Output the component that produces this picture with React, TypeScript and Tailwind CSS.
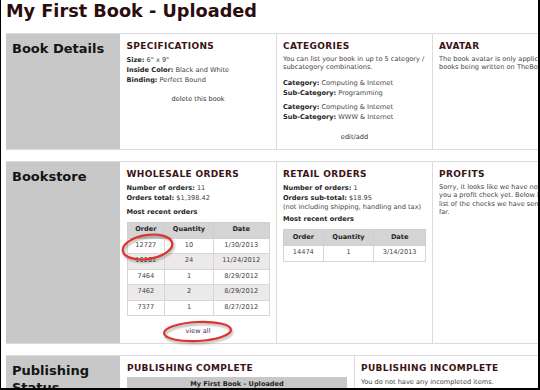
import React from "react";

type Kids = { children?: React.ReactNode };

const Heading = ({ children }: Kids) => (
  <div className="mb-[3.5px] whitespace-nowrap text-[9px] font-bold leading-[10px] tracking-[0.35px] text-[#3b1414]">
    {children}
  </div>
);

const Line = ({ label, value }: { label: string; value?: string }) => (
  <div className="whitespace-nowrap leading-[10px]">
    <span className="font-bold text-[#262626]">{label}</span>
    {value ? " " + value : ""}
  </div>
);

const SideTitle = ({ children }: Kids) => (
  <div className="w-[114px] shrink-0 bg-[#c8c8c8] pl-[6px] pt-[6px] text-[13px] font-bold leading-[17px] text-[#141414]">
    {children}
  </div>
);

function OrdersTable({
  rows,
  widths,
}: {
  rows: string[][];
  widths: string[];
}) {
  return (
    <table className="border-collapse text-center">
      <thead>
        <tr className="h-[16px] bg-[#d4d4d4]">
          <th className={"border border-[#cfcfcf] p-0 font-bold text-[#262626] " + widths[0]}>Order</th>
          <th className={"border border-[#cfcfcf] p-0 font-bold text-[#262626] " + widths[1]}>Quantity</th>
          <th className={"border border-[#cfcfcf] p-0 font-bold text-[#262626] " + widths[2]}>Date</th>
        </tr>
      </thead>
      <tbody>
        {rows.map((r, i) => (
          <tr key={i} className={i % 2 === 1 ? "h-[15.5px] bg-[#ebe9e9]" : "h-[15.5px] bg-white"}>
            {r.map((c, j) => (
              <td key={j} className="border border-[#d6d6d6] p-0 text-[#454545]">
                {c}
              </td>
            ))}
          </tr>
        ))}
      </tbody>
    </table>
  );
}

export default function App() {
  const wholesale = [
    ["12727", "10", "1/30/2013"],
    ["10201", "24", "11/24/2012"],
    ["7464", "1", "8/29/2012"],
    ["7462", "2", "8/29/2012"],
    ["7377", "1", "8/27/2012"],
  ];
  const retail = [["14474", "1", "3/14/2013"]];

  return (
    <div className="relative h-[390px] w-[540px] overflow-hidden border-b-2 border-l border-r-2 border-black bg-white font-['DejaVu_Sans',Verdana,sans-serif] text-[6.6px] text-[#444]">
      <div className="w-[760px]">
        <div className="h-[33px] pl-[5px] pt-[1px] text-[17.7px] font-bold leading-[20px] text-[#2b0d0d]">
          My First Book - Uploaded
        </div>

        {/* Book Details */}
        <div className="ml-[5px] flex h-[117px] border-y border-[#dcdcdc]">
          <SideTitle>Book Details</SideTitle>
          <div className="w-[157px] shrink-0 border-r border-[#dcdcdc] px-[6.5px] pt-[7px]">
            <Heading>SPECIFICATIONS</Heading>
            <Line label="Size:" value={'6" x 9"'} />
            <Line label="Inside Color:" value="Black and White" />
            <Line label="Binding:" value="Perfect Bound" />
            <div className="mt-[9.5px] text-center leading-[10px] text-[#333]">delete this book</div>
          </div>
          <div className="w-[156px] shrink-0 border-r border-[#dcdcdc] px-[6px] pt-[7px]">
            <Heading>CATEGORIES</Heading>
            <div className="whitespace-nowrap leading-[8px]">
              You can list your book in up to 5 category /<br />
              subcategory combinations.
            </div>
            <div className="mt-[7px]">
              <Line label="Category:" value="Computing & Internet" />
              <Line label="Sub-Category:" value="Programming" />
            </div>
            <div className="mt-[4.5px]">
              <Line label="Category:" value="Computing & Internet" />
              <Line label="Sub-Category:" value="WWW & Internet" />
            </div>
            <div className="mt-[9.5px] text-center leading-[10px] text-[#333]">edit/add</div>
          </div>
          <div className="w-[200px] shrink-0 px-[6px] pt-[7px]">
            <Heading>AVATAR</Heading>
            <div className="whitespace-nowrap leading-[8px]">
              The book avatar is only applicable for
              <br />
              books being written on TheBookPatch.com.
            </div>
          </div>
        </div>

        {/* Bookstore */}
        <div className="ml-[5px] mt-[11px] flex h-[183px] border-y border-[#dcdcdc]">
          <SideTitle>Bookstore</SideTitle>
          <div className="w-[157px] shrink-0 border-r border-[#dcdcdc] px-[6.5px] pt-[7px]">
            <Heading>WHOLESALE ORDERS</Heading>
            <Line label="Number of orders:" value="11" />
            <Line label="Orders total:" value="$1,398.42" />
            <div className="mt-[4px] whitespace-nowrap font-bold leading-[10px] text-[#262626]">Most recent orders</div>
            <div className="mt-[5px]">
              <OrdersTable rows={wholesale} widths={["w-[38px]", "w-[49px]", "w-[56px]"]} />
            </div>
            <div className="mt-[10px] text-center leading-[10px] text-[#45304c]">view all</div>
          </div>
          <div className="w-[156px] shrink-0 border-r border-[#dcdcdc] px-[6px] pt-[7px]">
            <Heading>RETAIL ORDERS</Heading>
            <Line label="Number of orders:" value="1" />
            <Line label="Orders sub-total:" value="$18.95" />
            <div className="whitespace-nowrap leading-[8px]">(not including shipping, handling and tax)</div>
            <div className="mt-[3.5px] whitespace-nowrap font-bold leading-[10px] text-[#262626]">Most recent orders</div>
            <div className="mt-[5px]">
              <OrdersTable rows={retail} widths={["w-[40px]", "w-[51px]", "w-[52px]"]} />
            </div>
          </div>
          <div className="w-[200px] shrink-0 px-[6px] pt-[7px]">
            <Heading>PROFITS</Heading>
            <div className="whitespace-nowrap leading-[8.5px]">
              Sorry, it looks like we have not sent
              <br />
              you a profit check yet. Below is a
              <br />
              list of the checks we have sent you so
              <br />
              far.
            </div>
          </div>
        </div>

        {/* Publishing Status */}
        <div className="ml-[5px] mt-[11px] flex h-[80px] border-y border-[#dcdcdc]">
          <SideTitle>
            Publishing
            <br />
            Status
          </SideTitle>
          <div className="w-[235px] shrink-0 border-r border-[#dcdcdc] px-[7px] pt-[7px]">
            <Heading>PUBLISHING COMPLETE</Heading>
            <div className="mt-[1px] h-[24px] bg-[#c8c8c8] pt-[2.5px] text-center font-bold leading-[10px] text-[#262626]">
              My First Book - Uploaded
            </div>
          </div>
          <div className="w-[220px] shrink-0 px-[6px] pt-[7px]">
            <Heading>PUBLISHING INCOMPLETE</Heading>
            <div className="whitespace-nowrap leading-[10px]">You do not have any incompleted items.</div>
          </div>
        </div>
      </div>

      {/* red annotation circles */}
      <svg className="pointer-events-none absolute -left-px top-0" width="540" height="390" viewBox="0 0 540 390">
        <defs>
          <filter id="sh" x="-20%" y="-50%" width="140%" height="200%">
            <feGaussianBlur stdDeviation="1.2" />
          </filter>
        </defs>
        <g transform="rotate(-9 147.5 247)">
          <ellipse cx="148.5" cy="249" rx="25" ry="12" fill="none" stroke="rgba(0,0,0,0.3)" strokeWidth="2.4" filter="url(#sh)" />
          <ellipse cx="147.5" cy="247" rx="25" ry="12" fill="none" stroke="#e0332b" strokeWidth="2.2" />
        </g>
        <g transform="rotate(-3 197.5 331.5)">
          <ellipse cx="198.5" cy="333.5" rx="33.5" ry="9.5" fill="none" stroke="rgba(0,0,0,0.3)" strokeWidth="2.4" filter="url(#sh)" />
          <ellipse cx="197.5" cy="331.5" rx="33.5" ry="9.5" fill="none" stroke="#e0332b" strokeWidth="2.2" />
        </g>
      </svg>
    </div>
  );
}
